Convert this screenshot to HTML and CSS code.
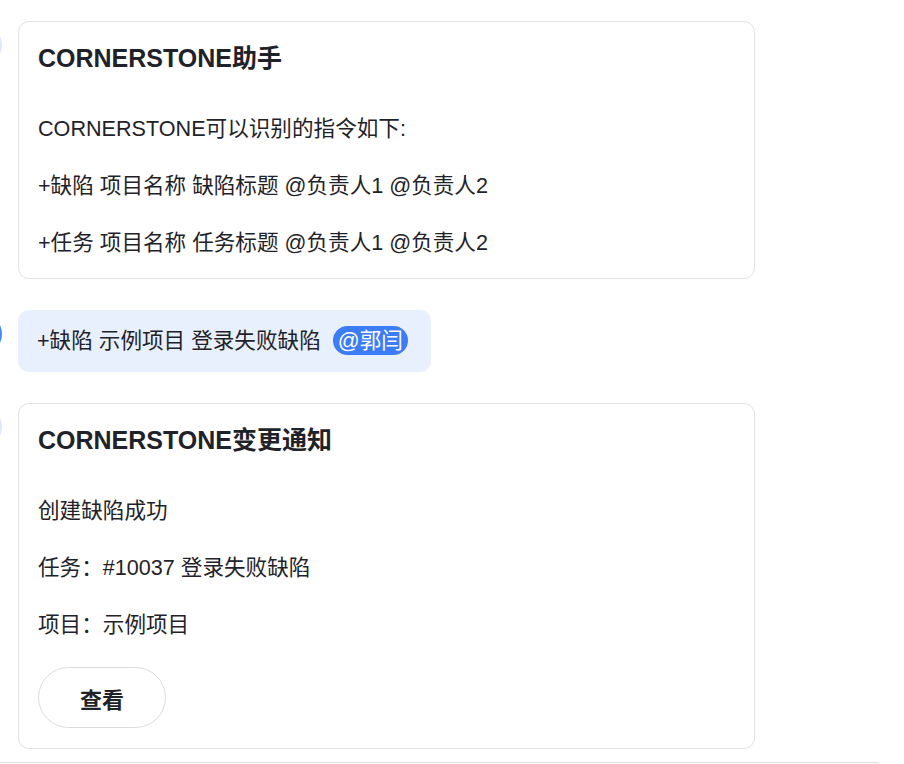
FILE: index.html
```html
<!DOCTYPE html>
<html lang="zh">
<head>
<meta charset="utf-8">
<link rel="stylesheet" href="styles.css">
</head>
<body>
<div class="chat">
  <div class="row">
    <div class="avatar avatar-pale"></div>
    <div class="card">
      <div class="card-title">CORNERSTONE助手</div>
      <p class="line">CORNERSTONE可以识别的指令如下:</p>
      <p class="line">+缺陷 项目名称 缺陷标题 @负责人1 @负责人2</p>
      <p class="line">+任务 项目名称 任务标题 @负责人1 @负责人2</p>
    </div>
  </div>
  <div class="row">
    <div class="avatar avatar-blue"></div>
    <div class="bubble">+缺陷 示例项目 登录失败缺陷 <span class="mention">@郭闫</span></div>
  </div>
  <div class="row">
    <div class="avatar avatar-pale"></div>
    <div class="card">
      <div class="card-title">CORNERSTONE变更通知</div>
      <p class="line">创建缺陷成功</p>
      <p class="line">任务：#10037 登录失败缺陷</p>
      <p class="line">项目：示例项目</p>
      <button class="view-btn">查看</button>
    </div>
  </div>
  <div class="next"></div>
</div>
</body>
</html>
```

FILE: styles.css
```css
html, body {
  margin: 0;
  padding: 0;
  background: #ffffff;
}
body {
  font-family: "Liberation Sans", "Noto Sans CJK SC", sans-serif;
  color: #1f2329;
  overflow: hidden;
  height: 764px;
}
.chat {
  display: flex;
  flex-direction: column;
  gap: 31px;
  padding-top: 21px;
}
.row {
  display: flex;
  align-items: flex-start;
  gap: 16px;
  margin-left: -38px;
}
.avatar {
  flex: 0 0 40px;
  width: 40px;
  height: 40px;
  border-radius: 50%;
  margin-top: 4px;
}
.avatar-pale { background: #dfe8fb; }
.avatar-blue { background: #4a86f5; }
.card {
  width: 737px;
  box-sizing: border-box;
  border: 1.5px solid #e2e2e2;
  border-radius: 11px;
  padding: 18px 20px 20px 19px;
  background: #fff;
}
.card-title {
  font-size: 25px;
  font-weight: bold;
  line-height: 36px;
  padding-bottom: 11px;
  color: #1f2329;
}
.line {
  margin: 27px 0 0 0;
  font-size: 21.6px;
  line-height: 30px;
}
.bubble {
  background: #e8f0fd;
  border-radius: 11px;
  padding: 16px 23px 16px 19px;
  font-size: 21.6px;
  line-height: 30px;
}
.mention {
  display: inline-block;
  background: #3c7cf6;
  color: #fff;
  border-radius: 15px;
  padding: 0 5px;
  line-height: 29px;
  margin-left: 6px;
}
.view-btn {
  display: block;
  margin-top: 27px;
  width: 128px;
  height: 61px;
  border: 1.5px solid #dcdcdc;
  border-radius: 31px;
  background: #fff;
  font-family: inherit;
  font-size: 22px;
  font-weight: bold;
  color: #1f2329;
}
.next {
  width: 880px;
  height: 4px;
  margin-top: -18px;
  box-sizing: border-box;
  border-top: 1.5px solid #dedede;
  border-right: 1.5px solid #dedede;
  border-top-right-radius: 10px;
}
```
